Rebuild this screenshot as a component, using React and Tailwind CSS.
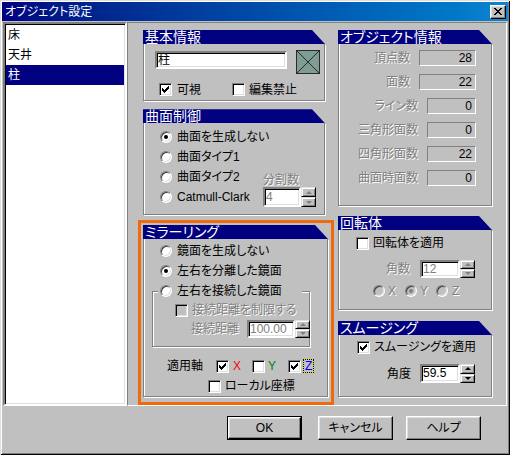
import React from 'react';

// Classic Win9x style dialog: オブジェクト設定

const sunken = 'border border-t-[#808080] border-l-[#808080] border-r-white border-b-white shadow-[inset_1px_1px_0_#000,inset_-1px_-1px_0_#dfdfdf]';
const raised = 'border border-t-white border-l-white border-r-black border-b-black shadow-[inset_-1px_-1px_0_#808080,inset_1px_1px_0_#dfdfdf]';
const dis = 'text-[#808080] [text-shadow:1px_1px_0_#fff]';

const Box = ({ checked, disabled }) => (
    <span className={`flex w-[13px] h-[13px] shrink-0 items-center justify-center ${sunken} ${disabled ? 'bg-[#c0c0c0]' : 'bg-white'}`}>
        {checked && (
            <svg width="7" height="7" viewBox="0 0 7 7" shapeRendering="crispEdges">
                <path
                    fill={disabled ? '#808080' : '#000'}
                    d="M6 0h1v1h-1z M5 1h2v1h-2z M0 2h1v1h-1z M4 2h3v1h-3z M0 3h2v1h-2z M3 3h3v1h-3z M0 4h5v1h-5z M1 5h3v1h-3z M2 6h1v1h-1z"
                />
            </svg>
        )}
    </span>
);

const Dot = ({ checked, disabled }) => (
    <span className={`flex w-[12px] h-[12px] shrink-0 items-center justify-center rounded-full border border-t-[#808080] border-l-[#808080] border-r-white border-b-white shadow-[inset_1px_1px_0_#404040,inset_-1px_-1px_0_#dfdfdf] ${disabled ? 'bg-[#c0c0c0]' : 'bg-white'}`}>
        {checked && <span className={`w-[4px] h-[4px] rounded-full ${disabled ? 'bg-[#808080]' : 'bg-black'}`} />}
    </span>
);

const Spin = ({ hClass, disabled }) => {
    const arrow = disabled ? 'border-b-[#808080]' : 'border-b-black';
    const arrowDown = disabled ? 'border-t-[#808080]' : 'border-t-black';
    const btn = 'flex flex-1 items-center justify-center bg-[#c0c0c0] border border-t-[#dfdfdf] border-l-[#dfdfdf] border-r-black border-b-black shadow-[inset_1px_1px_0_#fff,inset_-1px_-1px_0_#808080]';
    return (
        <div className={`flex flex-col w-[15px] shrink-0 ${hClass}`}>
            <div className={btn}>
                <span className={`w-0 h-0 border-x-[3px] border-x-transparent border-b-[3px] ${arrow}`} />
            </div>
            <div className={btn}>
                <span className={`w-0 h-0 border-x-[3px] border-x-transparent border-t-[3px] ${arrowDown}`} />
            </div>
        </div>
    );
};

const Group = ({ title, className, bodyClass = '', children }) => (
    <div className={`flex flex-col ${className}`}>
        <div className="h-[14px] shrink-0 bg-[#000080] pl-[2px] text-[14px] leading-[14px] text-white [clip-path:polygon(0_0,calc(100%_-_13px)_0,100%_100%,0_100%)]">
            {title}
        </div>
        <div className={`flex-1 border border-t-0 border-[#808080] shadow-[inset_1px_0_0_#fff,1px_1px_0_#fff] ${bodyClass}`}>
            {children}
        </div>
    </div>
);

const InfoRow = ({ label, value, wide }) => (
    <div className="flex h-[16px] items-center justify-end gap-[9px]">
        <span className={`whitespace-nowrap ${dis}`}>{label}</span>
        <span className={`h-[16px] shrink-0 ${wide ? 'w-[57px]' : 'w-[49px]'} border border-t-[#808080] border-l-[#808080] border-r-white border-b-white pr-[3px] text-right leading-[14px]`}>
            {value}
        </span>
    </div>
);

const Button = ({ children, isDefault, className = '' }) => (
    <div className={`h-[24px] w-[75px] ${isDefault ? 'border border-black' : ''} ${className}`}>
        <div className={`flex h-full w-full items-center justify-center bg-[#c0c0c0] ${raised}`}>{children}</div>
    </div>
);

export default function App() {
    const items = ['床', '天井', '柱'];
    const surfaceModes = ['曲面を生成しない', '曲面タイプ1', '曲面タイプ2', 'Catmull-Clark'];

    return (
        <div className="flex h-[455px] w-[510px] flex-col bg-[#c0c0c0] p-[2px] text-[12px] leading-[14px] text-black font-['Liberation_Sans','Noto_Sans_CJK_JP',sans-serif] [font-feature-settings:'palt'] shadow-[inset_1px_1px_0_#dfdfdf,inset_-1px_-1px_0_#000,inset_2px_2px_0_#fff,inset_-2px_-2px_0_#808080]">
            {/* title bar */}
            <div className="flex h-[19px] shrink-0 items-center bg-linear-to-r from-[#000080] to-[#1084d0] pl-[3px] pr-[2px]">
                <span className="text-white">オブジェクト設定</span>
                <div className={`ml-auto flex h-[14px] w-[16px] items-center justify-center bg-[#c0c0c0] ${raised}`}>
                    <svg width="8" height="7" viewBox="0 0 8 7" shapeRendering="crispEdges">
                        <path fill="#000" d="M0 0h2v1h-2z M6 0h2v1h-2z M1 1h2v1h-2z M5 1h2v1h-2z M2 2h4v1h-4z M3 3h2v1h-2z M2 4h4v1h-4z M1 5h2v1h-2z M5 5h2v1h-2z M0 6h2v1h-2z M6 6h2v1h-2z" />
                    </svg>
                </div>
            </div>

            {/* body */}
            <div className="mx-[1px] mt-[1px] flex h-[384px] shrink-0">
                {/* object list */}
                <div className="flex w-[124px] shrink-0 flex-col bg-white border-2 border-t-[#808080] border-l-[#808080] border-r-white border-b-white shadow-[inset_1px_1px_0_#000,inset_-1px_-1px_0_#dfdfdf]">
                    <div className="pt-[1px]">
                        {items.map((it, i) => (
                            <div
                                key={it}
                                className={`mx-[1px] h-[20px] pl-[2px] leading-[20px] ${i === 2 ? 'bg-[#000080] text-white' : ''}`}
                            >
                                {it}
                            </div>
                        ))}
                    </div>
                </div>

                {/* settings panel */}
                <div className="flex flex-1 border border-t-[#808080] border-l-[#808080] border-r-white border-b-white pl-[15px] pt-[7px]">
                    {/* left column */}
                    <div className="flex w-[185px] shrink-0 flex-col">
                        <Group title="基本情報" className="h-[72px] w-[182px]">
                            <div className="flex items-start pl-[11px] pt-[6px]">
                                <div className={`mt-[1px] h-[18px] w-[132px] bg-white pl-[1px] leading-[14px] border-2 ${sunken}`}>柱</div>
                                <div className="ml-[9px] h-[24px] w-[24px]">
                                    <svg width="24" height="24" viewBox="0 0 24 24">
                                        <rect x="0.5" y="0.5" width="23" height="23" fill="#7e9c94" stroke="#2a2a2a" />
                                        <path d="M1 1L23 23M23 1L1 23" stroke="#2a2a2a" strokeWidth="1" />
                                    </svg>
                                </div>
                            </div>
                            <div className="mt-[9px] flex h-[13px] items-center pl-[15px]">
                                <Box checked />
                                <span className="ml-[5px] w-[24px] whitespace-nowrap">可視</span>
                                <span className="ml-[31px]"><Box /></span>
                                <span className="ml-[4px] whitespace-nowrap">編集禁止</span>
                            </div>
                        </Group>

                        <Group title="曲面制御" className="mt-[8px] h-[107px] w-[182px]">
                            <div className="flex pl-[16px] pt-[4px]">
                                <div className="flex w-[103px] shrink-0 flex-col">
                                    {surfaceModes.map((t, i) => (
                                        <div key={t} className="flex h-[20px] items-center">
                                            <Dot checked={i === 0} />
                                            <span className="ml-[5px] whitespace-nowrap">{t}</span>
                                        </div>
                                    ))}
                                </div>
                                <div className="flex flex-col justify-end">
                                    <span className={`h-[14px] whitespace-nowrap ${dis}`}>分割数</span>
                                    <div className="flex h-[20px]">
                                        <div className={`h-[20px] w-[38px] bg-white pl-[1px] leading-[16px] border-2 ${sunken} text-[#808080]`}>4</div>
                                        <Spin hClass="h-[20px]" disabled />
                                    </div>
                                </div>
                            </div>
                        </Group>

                        {/* highlighted mirroring group */}
                        <div className="-ml-[5px] mt-[5px] h-[185px] w-[196px] shrink-0 border-[3px] border-[#ef6a0c] pl-[2px] pt-[2px]">
                            <Group title="ミラーリング" className="h-[171px] w-[185px]" bodyClass="flex flex-col pt-[2px]">
                                <div className="flex h-[20px] items-center pl-[16px]">
                                    <Dot />
                                    <span className="ml-[5px]">鏡面を生成しない</span>
                                </div>
                                <div className="flex h-[20px] items-center pl-[16px]">
                                    <Dot checked />
                                    <span className="ml-[5px]">左右を分離した鏡面</span>
                                </div>
                                <div className="ml-[8px] mt-[10px] flex h-[56px] w-[158px] shrink-0 flex-col border border-[#808080] shadow-[inset_1px_1px_0_#fff,1px_1px_0_#fff]">
                                    <div className="-mt-[11px] ml-[5px] flex h-[20px] w-[144px] shrink-0 items-center bg-[#c0c0c0] pl-[2px]">
                                        <Dot />
                                        <span className="ml-[5px] whitespace-nowrap">左右を接続した鏡面</span>
                                    </div>
                                    <div className="flex h-[18px] shrink-0 items-center pl-[22px]">
                                        <Box disabled />
                                        <span className={`ml-[4px] whitespace-nowrap ${dis}`}>接続距離を制限する</span>
                                    </div>
                                    <div className="mt-[1px] flex h-[18px] shrink-0 items-center pl-[38px]">
                                        <span className={`w-[50px] shrink-0 whitespace-nowrap ${dis}`}>接続距離</span>
                                        <div className={`ml-[6px] h-[18px] w-[48px] shrink-0 bg-white pl-[1px] leading-[14px] border-2 ${sunken} text-[#808080]`}>100.00</div>
                                        <Spin hClass="h-[18px]" disabled />
                                    </div>
                                </div>
                                <div className="mt-[9px] flex h-[20px] items-center pl-[23px]">
                                    <span className="w-[36px] shrink-0 whitespace-nowrap">適用軸</span>
                                    <span className="ml-[13px]"><Box checked /></span>
                                    <span className="ml-[4px] w-[8px] text-[#ff0000]">X</span>
                                    <span className="ml-[11px]"><Box /></span>
                                    <span className="ml-[3px] w-[9px] text-[#008000]">Y</span>
                                    <span className="ml-[11px]"><Box checked /></span>
                                    <span className="ml-[2px] border border-[#e8e800] px-[1px] leading-[12px] text-[#0000ff] outline-1 outline-dotted outline-black -outline-offset-1">Z</span>
                                </div>
                                <div className="flex h-[20px] items-center pl-[64px]">
                                    <Box />
                                    <span className="ml-[4px] whitespace-nowrap">ローカル座標</span>
                                </div>
                            </Group>
                        </div>
                    </div>

                    {/* right column */}
                    <div className="ml-[10px] flex w-[154px] shrink-0 flex-col">
                        <Group title="オブジェクト情報" className="h-[176px]" bodyClass="flex flex-col gap-[8px] pr-[15px] pt-[6px]">
                            <InfoRow label="頂点数" value="28" wide />
                            <InfoRow label="面数" value="22" wide />
                            <InfoRow label="ライン数" value="0" />
                            <InfoRow label="三角形面数" value="0" />
                            <InfoRow label="四角形面数" value="22" />
                            <InfoRow label="曲面時面数" value="0" />
                        </Group>

                        <Group title="回転体" className="mt-[10px] h-[94px]" bodyClass="flex flex-col pt-[3px]">
                            <div className="flex h-[20px] items-center pl-[17px]">
                                <Box />
                                <span className="ml-[4px] whitespace-nowrap">回転体を適用</span>
                            </div>
                            <div className="mt-[7px] flex h-[18px] items-center justify-end pr-[16px]">
                                <span className={`whitespace-nowrap ${dis}`}>角数</span>
                                <div className={`ml-[10px] h-[18px] w-[40px] shrink-0 bg-white pl-[1px] leading-[14px] border-2 ${sunken} text-[#808080]`}>12</div>
                                <Spin hClass="h-[18px]" disabled />
                            </div>
                            <div className="mt-[3px] flex h-[20px] items-center pl-[34px]">
                                <Dot disabled />
                                <span className={`ml-[3px] w-[8px] ${dis}`}>X</span>
                                <span className="ml-[9px]"><Dot checked disabled /></span>
                                <span className={`ml-[3px] w-[8px] ${dis}`}>Y</span>
                                <span className="ml-[8px]"><Dot disabled /></span>
                                <span className={`ml-[4px] w-[8px] ${dis}`}>Z</span>
                            </div>
                        </Group>

                        <Group title="スムージング" className="mt-[11px] h-[76px]" bodyClass="flex flex-col pt-[2px]">
                            <div className="flex h-[20px] items-center pl-[18px]">
                                <Box checked />
                                <span className="ml-[4px] whitespace-nowrap">スムージングを適用</span>
                            </div>
                            <div className="mt-[7px] flex h-[19px] items-center justify-end pr-[16px]">
                                <span className="whitespace-nowrap">角度</span>
                                <div className={`ml-[9px] h-[19px] w-[40px] shrink-0 bg-white pl-[1px] leading-[15px] border-2 ${sunken}`}>59.5</div>
                                <Spin hClass="h-[19px]" />
                            </div>
                        </Group>
                    </div>
                </div>
            </div>

            {/* dialog buttons */}
            <div className="mt-[10px] flex">
                <Button isDefault className="ml-[225px]">OK</Button>
                <Button className="ml-[16px]">キャンセル</Button>
                <Button className="ml-[13px]">ヘルプ</Button>
            </div>
        </div>
    );
}
